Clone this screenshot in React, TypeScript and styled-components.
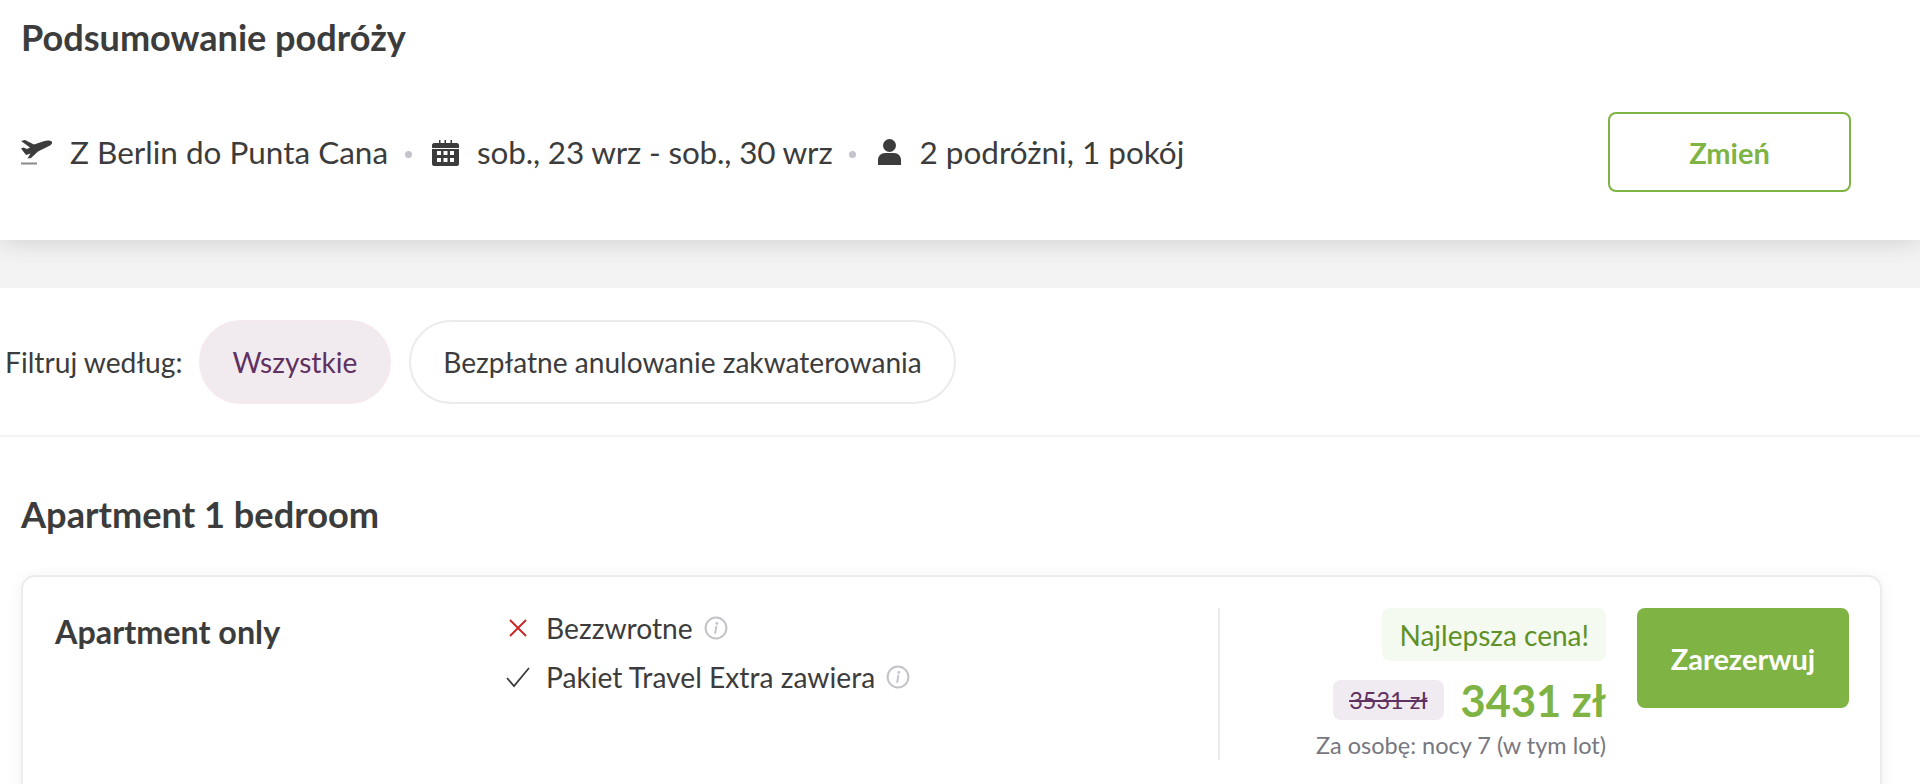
import React from "react";
import styled, { createGlobalStyle } from "styled-components";

const Global = createGlobalStyle`
  html, body { margin: 0; padding: 0; background: #fff; }
  body { font-family: Lato, "Noto Sans", sans-serif; color: #3c3c3c; height: 784px; overflow: hidden; }
`;
const Page = styled.div`
  height: 784px;
  overflow: hidden;
`;
const Summary = styled.header`
  position: relative;
  z-index: 1;
  height: 240px;
  box-sizing: border-box;
  background: #fff;
  box-shadow: 0 2px 24px rgba(0, 0, 0, 0.14);
  padding: 15px 69px 0 21px;
`;
const SummaryTitle = styled.h1`
  margin: 0;
  font-size: 36.1px;
  line-height: 44px;
  font-weight: 700;
`;
const SummaryRow = styled.div`
  display: flex;
  align-items: center;
  justify-content: space-between;
  margin-top: 53px;
`;
const Trip = styled.div`
  display: flex;
  align-items: center;
  font-size: 31.5px;
  line-height: 40px;
`;
const TripIcon = styled.svg`
  flex: none;
  fill: #3c3c3c;
  margin-right: 18px;
`;
const TripDates = styled.span`
  letter-spacing: -0.18px;
`;
const Dot = styled.span<{ $after: number }>`
  width: 7px;
  height: 7px;
  border-radius: 50%;
  background: #c4c4cc;
  margin: 4px ${(p) => p.$after}px 0 17px;
`;
const ChangeButton = styled.button`
  width: 243px;
  height: 80px;
  border: 2px solid #7fb344;
  border-radius: 8px;
  background: #fff;
  color: #7fb344;
  font: 700 29px Lato, sans-serif;
`;
const Band = styled.div`
  height: 48px;
  background: #f3f3f3;
`;
const Filters = styled.div`
  height: 149px;
  box-sizing: border-box;
  display: flex;
  align-items: center;
  padding: 0 0 0 5px;
  border-bottom: 2px solid #f3f3f3;
  font-size: 28.2px;
`;
const FilterLabel = styled.span`
  margin-right: 16px;
`;
const Pill = styled.button<{ $active?: boolean }>`
  height: 84px;
  padding: 0 32px;
  margin-right: 18px;
  border-radius: 42px;
  border: 2px solid ${(p) => (p.$active ? "#f5e9ee" : "#ebebeb")};
  background: ${(p) => (p.$active ? "#f1eaef" : "#fff")};
  color: ${(p) => (p.$active ? "#5f3060" : "#3c3c3c")};
  font: 400 28.1px Lato, sans-serif;
`;
const Room = styled.section`
  padding: 55px 38px 0 21px;
`;
const RoomTitle = styled.h2`
  margin: 0 0 39px;
  font-size: 36.2px;
  line-height: 44px;
  font-weight: 700;
`;
const Card = styled.article`
  display: flex;
  height: 320px;
  box-sizing: border-box;
  padding: 31px 31px 0 32px;
  border: 2px solid #ececec;
  border-radius: 14px;
  box-shadow: 0 2px 16px rgba(0, 0, 0, 0.06);
`;
const OfferName = styled.h3`
  width: 451px;
  flex: none;
  margin: 4px 0 0;
  font-size: 32.3px;
  line-height: 40px;
  font-weight: 700;
`;
const Features = styled.ul`
  list-style: none;
  margin: 0;
  padding: 2px 0 0;
  width: 712px;
  flex: none;
`;
const Feature = styled.li`
  display: flex;
  align-items: center;
  height: 36px;
  margin-bottom: 13px;
  font-size: 28.2px;
`;
const MarkIcon = styled.svg`
  flex: none;
  width: 24px;
  height: 24px;
  margin-right: 16px;
  fill: none;
  stroke-width: 1.8;
`;
const InfoIcon = styled.svg`
  flex: none;
  width: 24px;
  height: 24px;
  margin-left: 11px;
`;
const PriceColumn = styled.div`
  flex: 1;
  height: 152px;
  border-left: 2px solid #ebebeb;
  display: flex;
  flex-direction: column;
  align-items: flex-end;
`;
const BestBadge = styled.div`
  height: 56px;
  padding: 0 17px;
  display: flex;
  align-items: center;
  border-radius: 8px;
  background: #f4faf0;
  color: #5f9127;
  font-size: 28px;
`;
const PriceLine = styled.div`
  display: flex;
  align-items: center;
  margin-top: 16px;
`;
const OldPrice = styled.s`
  height: 40px;
  padding: 0 16px;
  display: flex;
  align-items: center;
  border-radius: 8px;
  background: #f0ebf0;
  color: #5f3060;
  font-size: 23.5px;
`;
const Price = styled.strong`
  margin-left: 17px;
  font-size: 43.4px;
  line-height: 46px;
  color: #7fb344;
`;
const PriceNote = styled.div`
  margin-top: 7px;
  font-size: 23.5px;
  line-height: 30px;
  color: #77777f;
`;
const BookButton = styled.button`
  flex: none;
  width: 212px;
  height: 100px;
  margin-left: 31px;
  border: none;
  border-radius: 8px;
  background: #7fb344;
  color: #fff;
  font: 700 29px Lato, sans-serif;
`;

const Info = () => (
  <InfoIcon viewBox="0 0 24 24">
    <circle cx="12" cy="12" r="10.4" fill="none" stroke="#c2c2c8" strokeWidth="2" />
    <circle cx="12.8" cy="7.4" r="1.4" fill="#c2c2c8" />
    <path d="M12.3 10.8 11.2 17" stroke="#c2c2c8" strokeWidth="1.9" fill="none" strokeLinecap="round" />
  </InfoIcon>
);

export default function App() {
  return (
    <Page>
      <Global />
      <Summary>
        <SummaryTitle>Podsumowanie podróży</SummaryTitle>
        <SummaryRow>
          <Trip>
            <TripIcon width="31" height="25" viewBox="0 0 31 25">
              <path d="M0 1 4 0 13 4.500 22 1.500C26 0 30 0 31 2 31.500 3.500 30 5 27 6.500L17 11.500 10 18 6.500 18.500 9.500 13.500 5 15 0 8.500 2.500 7.500 6 9 9 7.500Z" />
              <rect x="0" y="22.500" width="16" height="2" fill="#8a8a8a" />
            </TripIcon>
            Z Berlin do Punta Cana
            <Dot $after={20} />
            <TripIcon width="27" height="27" viewBox="0 0 27 27">
              <path fillRule="evenodd" d="M2 4H7V1H8.500V4H12.500V1H14V4H18.500V1H20V4H25C26 4 27 5 27 6V9H0V6C0 5 1 4 2 4ZM0 10H27V25C27 26 26 27 25 27H2C1 27 0 26 0 25ZM5 12V16H9V12ZM11.500 12V16H15.500V12ZM18 12V16H22V12ZM5 19V23H9V19ZM11.500 19V23H15.500V19ZM18 19V23H22V19Z" />
            </TripIcon>
            <TripDates>sob., 23 wrz - sob., 30 wrz</TripDates>
            <Dot $after={22} />
            <TripIcon width="23" height="26" viewBox="0 0 23 26">
              <circle cx="11.5" cy="6.500" r="6.500" />
              <path d="M0 26V21C0 17 3 14 7 14H16C20 14 23 17 23 21V26Z" />
            </TripIcon>
            2 podróżni, 1 pokój
          </Trip>
          <ChangeButton>Zmień</ChangeButton>
        </SummaryRow>
      </Summary>
      <Band />
      <Filters>
        <FilterLabel>Filtruj według:</FilterLabel>
        <Pill $active>Wszystkie</Pill>
        <Pill>Bezpłatne anulowanie zakwaterowania</Pill>
      </Filters>
      <Room>
        <RoomTitle>Apartment 1 bedroom</RoomTitle>
        <Card>
          <OfferName>Apartment only</OfferName>
          <Features>
            <Feature>
              <MarkIcon viewBox="0 0 24 24" stroke="#cc2222">
                <path d="M4 4 20 20M20 4 4 20" />
              </MarkIcon>
              Bezzwrotne
              <Info />
            </Feature>
            <Feature>
              <MarkIcon viewBox="0 0 24 24" stroke="#3c3c3c">
                <path d="M1 13 8 21 23 3" />
              </MarkIcon>
              Pakiet Travel Extra zawiera
              <Info />
            </Feature>
          </Features>
          <PriceColumn>
            <BestBadge>Najlepsza cena!</BestBadge>
            <PriceLine>
              <OldPrice>3531 zł</OldPrice>
              <Price>3431 zł</Price>
            </PriceLine>
            <PriceNote>Za osobę: nocy 7 (w tym lot)</PriceNote>
          </PriceColumn>
          <BookButton>Zarezerwuj</BookButton>
        </Card>
      </Room>
    </Page>
  );
}
